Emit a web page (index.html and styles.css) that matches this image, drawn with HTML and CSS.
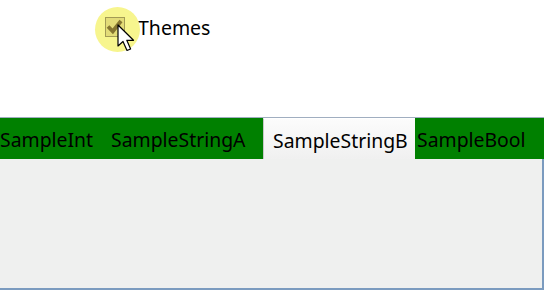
FILE: index.html
```html
<!DOCTYPE html>
<html>
<head>
<meta charset="utf-8">
<link rel="stylesheet" href="styles.css">
</head>
<body>
<div class="page">
  <div class="top">
    <div class="check-row">
      <div class="check-wrap">
        <span class="halo"></span>
        <span class="box">
          <svg width="20" height="20" viewBox="0 0 20 20"><path d="M3 9.5 L7.8 14.3 L16 4" fill="none" stroke="#857530" stroke-width="3.8"/></svg>
        </span>
        <svg class="cursor" width="22" height="32" viewBox="0 0 22 32"><path d="M1 1 L1 22 L6 17.5 L10 26.5 L13.6 25 L9.8 16.3 L16.5 16.3 Z" fill="#fff" stroke="#000" stroke-width="1.2" stroke-linejoin="round"/></svg>
      </div>
      <span class="label">Themes</span>
    </div>
  </div>
  <div class="tabs">
    <div class="strip">
      <div class="tab t1">SampleInt</div>
      <div class="tab t2">SampleStringA</div>
      <div class="tab sel">SampleStringB</div>
      <div class="tab t4">SampleBool</div>
    </div>
    <div class="content"></div>
  </div>
</div>
</body>
</html>
```
FILE: styles.css
```css
html, body { margin: 0; padding: 0; background: #fff; }
body { font-family: "Noto Sans", "Open Sans", sans-serif; color: #000; }
.page { width: 548px; height: 292px; overflow: hidden; }
.top { height: 117px; }
.check-row { display: flex; align-items: flex-start; padding-left: 105px; padding-top: 17px; }
.check-wrap { position: relative; width: 20px; height: 20px; margin-right: 13px; }
.halo { position: absolute; left: -10px; top: -10px; width: 45px; height: 45px; border-radius: 50%; background: #f7f58e; }
.box { position: absolute; left: 0; top: 0; width: 18px; height: 18px; border: 1px solid #a39b55; background: #e3dc78; }
.box svg { position: absolute; left: -1px; top: -1px; }
.cursor { position: absolute; left: 12px; top: 7px; }
.label { font-size: 19.5px; line-height: 24px; margin-top: -1px; }
.tabs { width: 544px; border-top: 1px solid #a0aec0; }
.strip { display: flex; height: 41px; background: #008000; font-size: 19.4px; }
.tab { display: flex; align-items: center; padding-top: 2px; box-sizing: border-box; height: 41px; white-space: nowrap; }
.t1 { padding-left: 0; width: 111px; }
.t2 { width: 152px; }
.sel { background: linear-gradient(#fcfcfc, #f0f0f0); border-left: 1px solid #c8c8c8; border-top: 1px solid #fff; padding-left: 9px; width: 152px; }
.t4 { padding-left: 2px; }
.content { height: 129px; background: #eff0ef; border-right: 2px solid #7b9bbf; border-bottom: 2px solid #7b9bbf; }
```
